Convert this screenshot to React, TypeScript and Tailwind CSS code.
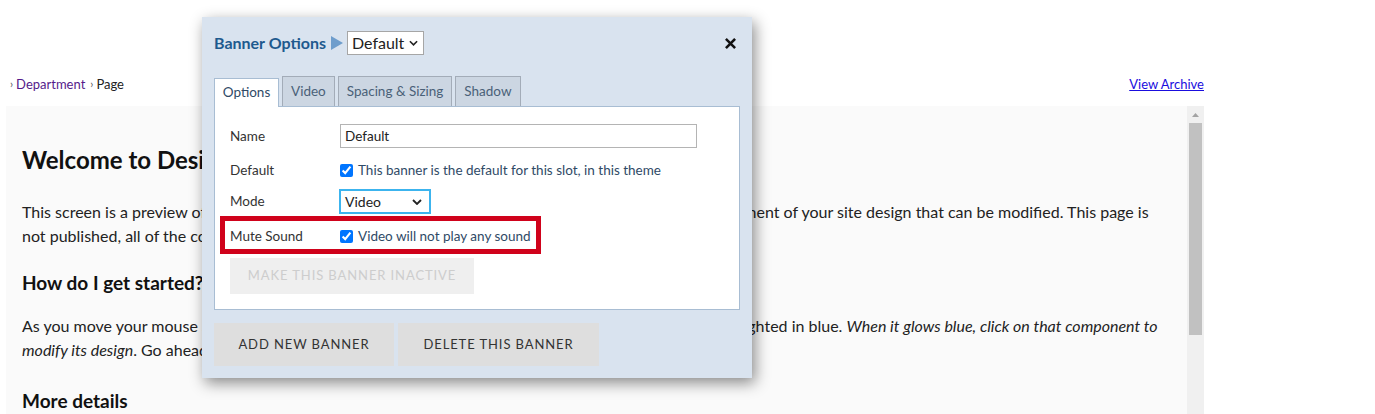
import React from 'react';

const font = "font-['Lato','Open_Sans',sans-serif]";

function Chevron({ className }: { className?: string }) {
  return (
    <svg className={className} viewBox="0 0 10 6" fill="none" stroke="currentColor" strokeWidth={1.8}>
      <path d="M1 1l4 4 4-4" />
    </svg>
  );
}

function CheckRow({ label, text }: { label: string; text: string }) {
  return (
    <div className="flex items-center h-6">
      <div className="w-[110px] text-[13.5px] text-[#333]">{label}</div>
      <input
        type="checkbox"
        checked
        readOnly
        className="w-[13px] h-[13px] m-0 accent-[#0075ff]"
      />
      <span className="ml-[5px] text-[13.5px] text-[#2f4a66]">{text}</span>
    </div>
  );
}

function BannerDialog() {
  const tabs = ['Video', 'Spacing & Sizing', 'Shadow'];

  return (
    <div className="absolute left-[202px] top-[17px] w-[550px] h-[361px] bg-[#d9e3ef] shadow-[3px_5px_14px_rgba(0,0,0,0.45)] px-3 pt-[14px]">
      <div className="flex items-center justify-between h-6">
        <div className="flex items-center">
          <span className="text-[16px] font-bold text-[#1e5a8e]">Banner Options</span>
          <svg className="w-[12px] h-[14px] ml-[5px]" viewBox="0 0 12 14">
            <path d="M0 0L12 7L0 14Z" fill="#6e9dcc" />
          </svg>
          <div className="ml-[4px] h-6 w-[77px] bg-white border border-[#a6a6a6] flex items-center pl-[4px] text-[16px] text-[#222]">
            Default
            <Chevron className="w-[9px] h-[6px] ml-[5px] text-[#222]" />
          </div>
        </div>
        <svg className="w-[11px] h-[11px] mr-1" viewBox="0 0 12 12" stroke="#111" strokeWidth={2.8} strokeLinecap="square">
          <path d="M2 2l8 8M10 2l-8 8" />
        </svg>
      </div>

      <div className="flex mt-[21px] h-[30px] items-end">
        <div className="h-[29px] w-[65px] bg-white border border-[#a8bdd3] border-b-0 flex items-center justify-center text-[13.5px] text-[#2f4a66] relative z-10 -mb-px pb-px">
          Options
        </div>
        {tabs.map((t) => (
          <div
            key={t}
            className="ml-[3px] h-[30px] px-[8px] bg-[#ccd6e2] border border-[#a3acb8] border-b-0 flex items-center text-[13.5px] text-[#4a6178]"
          >
            {t}
          </div>
        ))}
      </div>

      <div className="relative h-[204px] bg-white border border-[#a8bdd3] pl-[15px] pt-[17px]">
        <div className="flex items-center h-6">
          <div className="w-[110px] text-[13.5px] text-[#333]">Name</div>
          <div className="w-[357px] h-6 border border-[#b4b4b4] flex items-center pl-[4px] text-[13.5px] text-[#222]">
            Default
          </div>
        </div>
        <div className="mt-[10px]">
          <CheckRow label="Default" text="This banner is the default for this slot, in this theme" />
        </div>
        <div className="flex items-center h-[25px] mt-[7px]">
          <div className="w-[109px] text-[13.5px] text-[#333]">Mode</div>
          <div className="w-[92px] h-[25px] border-2 border-[#3cb4ee] flex items-center justify-between pl-[4px] pr-[7px] text-[14px] text-[#222]">
            Video
            <Chevron className="w-[10px] h-[6px] text-[#222]" />
          </div>
        </div>
        <div className="mt-[10px]">
          <CheckRow label="Mute Sound" text="Video will not play any sound" />
        </div>
        <div className="mt-[10px] w-[244px] h-9 bg-[#efefef] flex items-center justify-center text-[13px] tracking-[0.9px] text-[#cdcdcd]">
          MAKE THIS BANNER INACTIVE
        </div>

        <div className="absolute left-[5px] top-[109px] w-[321px] h-[38px] border-[5px] border-[#d0021b]" />
      </div>

      <div className="flex gap-[4px] mt-[13px]">
        <div className="w-[180px] h-[43px] bg-[#dedede] flex items-center justify-center text-[13px] tracking-[0.9px] text-[#333]">
          ADD NEW BANNER
        </div>
        <div className="w-[201px] h-[43px] bg-[#dedede] flex items-center justify-center text-[13px] tracking-[0.9px] text-[#333]">
          DELETE THIS BANNER
        </div>
      </div>
    </div>
  );
}

export default function App() {
  return (
    <div className={`relative w-[1375px] h-[414px] overflow-hidden bg-white ${font}`}>
      <div className="ml-[6px] w-[1198px]">
        <div className="h-[106px] flex items-end justify-between pb-[12px] pl-[4px]">
          <div className="flex items-center text-[13px]">
            <span className="text-[#555] text-[11px] mr-[3px]">›</span>
            <span className="text-[#551a8b]">Department</span>
            <span className="text-[#555] text-[11px] ml-[5px] mr-[3px]">›</span>
            <span className="text-[#222]">Page</span>
          </div>
          <a className="text-[13px] text-[#1a0dde] underline">View Archive</a>
        </div>

        <div className="flex h-[308px] bg-[#fafafa]">
          <div className="flex-1 pl-4 pt-[38px] text-[#222]">
            <h1 className="text-[24px] leading-8 font-bold text-[#111]">Welcome to Design Mode</h1>
            <p className="mt-6 text-[16px] leading-6">
              This screen is a preview of the design for your site. Move your mouse over this page to see every component of your site design that can be modified. This page is
              <br />
              not published, all of the content you see here is placeholder text.
            </p>
            <h2 className="mt-[21px] text-[19px] leading-7 font-bold text-[#111]">How do I get started?</h2>
            <p className="mt-[17px] text-[16px] leading-6">
              As you move your mouse around the screen, each part of this page that can be edited will become highlighted in blue.{' '}
              <em>When it glows blue, click on that component to</em>
              <br />
              <em>modify its design</em>. Go ahead, give it a try.
            </p>
            <h2 className="mt-[25px] text-[19px] leading-7 font-bold text-[#111]">More details</h2>
          </div>
          <div className="w-[17px] bg-[#f0f0f0] flex flex-col items-center">
            <svg className="w-[7px] h-[4px] mt-[7px]" viewBox="0 0 7 4">
              <path d="M0 4L3.5 0L7 4Z" fill="#a3a3a3" />
            </svg>
            <div className="w-[13px] h-[212px] bg-[#c1c1c1] mt-[6px]" />
          </div>
        </div>
      </div>

      <BannerDialog />
    </div>
  );
}
